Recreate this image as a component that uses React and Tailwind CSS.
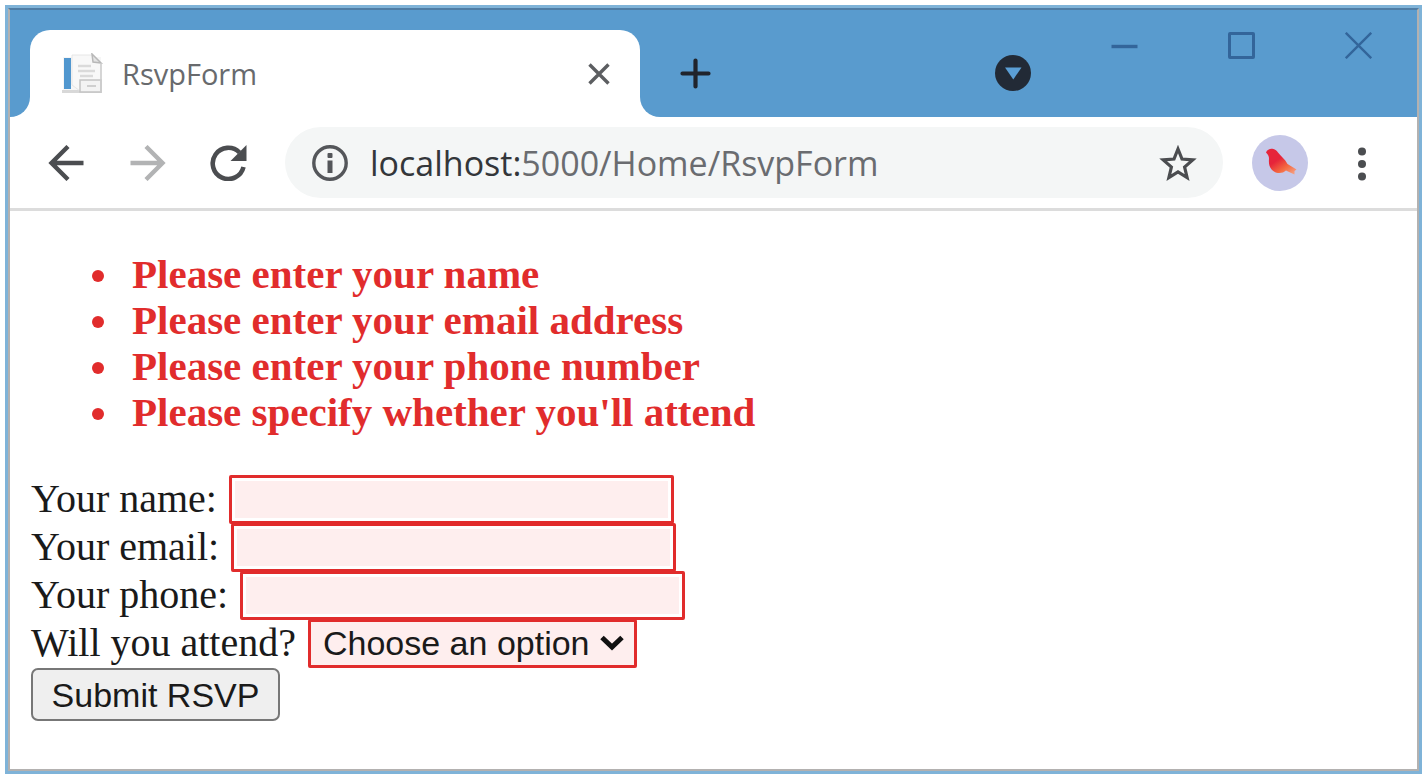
function Favicon() {
  return (
    <svg width="42" height="42" viewBox="0 0 42 42" aria-hidden="true" className="shrink-0">
      <rect x="1" y="4" width="38" height="36" fill="#f6f6f6" />
      <rect x="2" y="5" width="7" height="31" fill="#5197cf" />
      <rect x="0" y="37" width="40" height="3" fill="#d8d8d8" />
      <path d="M10 2h20l9 8v28H18l-8-6z" fill="#f8f8f8" stroke="#e6e6e6" />
      <path d="M30 1l1 8 8 1z" fill="#e4e4e4" stroke="#b8b8b8" strokeWidth="1.500" />
      <path d="M16 13h13M16 18h17M18 23h13" stroke="#dadada" strokeWidth="2.500" />
      <path d="M18 27h21v12H18z" fill="#f3f3f3" stroke="#c4c4c4" strokeWidth="1.500" />
      <path d="M25 33h9" stroke="#cfcfcf" strokeWidth="2" />
      <path d="M39 10v29" stroke="#cccccc" strokeWidth="1.500" />
    </svg>
  );
}

function BirdAvatar() {
  return (
    <svg width="56" height="56" viewBox="0 0 56 56" aria-hidden="true">
      <defs>
        <linearGradient id="bird" x1="0.1" y1="0" x2="0.9" y2="1">
          <stop offset="0.4" stopColor="#e6243a" />
          <stop offset="0.7" stopColor="#f4683f" />
          <stop offset="1" stopColor="#f5a184" />
        </linearGradient>
      </defs>
      <circle cx="28" cy="28" r="28" fill="#c6c8e8" />
      <path
        d="M14 17.500C15 14.500 18 13.500 20.500 13.800C23 14 24.500 15.500 26 17.500C28.500 21 33 24 35.500 29L44.500 34.500L42.500 36L42.500 39.500L36 36.500L34 35.500C31 38.500 25.500 38.800 22 36.500C17.500 33.500 16.500 29 17 24C17 21.500 16.500 20 14 17.500Z"
        fill="url(#bird)"
      />
    </svg>
  );
}

const errors = [
  "Please enter your name",
  "Please enter your email address",
  "Please enter your phone number",
  "Please specify whether you'll attend",
];

const fields = [
  { id: "name", label: "Your name:", type: "text" },
  { id: "email", label: "Your email:", type: "email" },
  { id: "phone", label: "Your phone:", type: "tel" },
];

function TitleBar() {
  return (
    <header className="flex h-[107px] bg-white">
      <div className="w-5 shrink-0 rounded-br-[20px] bg-[#599bce]" />
      <div className="w-[610px] shrink bg-[#599bce] pt-5">
        <div className="flex h-full items-center rounded-t-[20px] bg-white pr-[30px] pl-8">
          <Favicon />
          <span className="ml-[18px] flex-1 font-['Open_Sans',sans-serif] text-[29px] text-[#686a6d]">
            RsvpForm
          </span>
          <button type="button" aria-label="Close tab">
            <svg width="22" height="22" viewBox="0 0 22 22" stroke="#5c5e61" strokeWidth="3.400">
              <path d="M1.500 1.500l19 19M20.500 1.500l-19 19" />
            </svg>
          </button>
        </div>
      </div>
      <div className="flex flex-1 rounded-bl-[20px] bg-[#599bce] pr-[45px] pl-10">
        <button type="button" aria-label="New tab" className="mt-[48px] self-start">
          <svg width="31" height="31" viewBox="0 0 31 31" stroke="#20242c" strokeWidth="4.200" strokeLinecap="round">
            <path d="M15.500 2.500v26M2.500 15.500h26" />
          </svg>
        </button>
        <button type="button" aria-label="Search tabs" className="mt-[45px] mr-20 ml-auto self-start">
          <svg width="36" height="36" viewBox="0 0 36 36">
            <circle cx="18" cy="18" r="18" fill="#222a36" />
            <path d="M10 12.500h16.500l-8.200 12z" fill="#5b9fd6" />
          </svg>
        </button>
        <div className="flex gap-[90px] self-start pt-[22px]">
          <button type="button" aria-label="Minimize">
            <svg width="27" height="27" viewBox="0 0 27 27" stroke="#33659a" strokeWidth="3.400">
              <path d="M0.500 14.500h26" />
            </svg>
          </button>
          <button type="button" aria-label="Maximize">
            <svg width="27" height="27" viewBox="0 0 27 27" fill="none" stroke="#33659a" strokeWidth="3">
              <rect x="1.500" y="1.500" width="24" height="24" rx="0.500" />
            </svg>
          </button>
          <button type="button" aria-label="Close">
            <svg width="27" height="27" viewBox="0 0 27 27" stroke="#33659a" strokeWidth="2.400">
              <path d="M0.800 0.800l25.400 25.400M26.200 0.800L0.800 26.200" />
            </svg>
          </button>
        </div>
      </div>
    </header>
  );
}

function Toolbar() {
  return (
    <nav className="flex h-[94px] items-center border-b-[3px] border-[#dcdcdc] pr-[50px] pl-[38px]">
      <button type="button" aria-label="Back" className="mr-[46px]">
        <svg width="36" height="36" viewBox="0 0 36 36" fill="none" stroke="#4b4d50" strokeWidth="4.400">
          <path d="M35.500 18H4M20 1.500L3.500 18 20 34.500" />
        </svg>
      </button>
      <button type="button" aria-label="Forward" className="mr-11">
        <svg width="36" height="36" viewBox="0 0 36 36" fill="none" stroke="#b2b3b4" strokeWidth="4.400">
          <path d="M0.500 18H32M16 1.500L32.500 18 16 34.500" />
        </svg>
      </button>
      <button type="button" aria-label="Reload" className="mr-[38px]">
        <svg width="37" height="36" viewBox="0 0 37 36">
          <path d="M33.500 22A15.600 15.600 0 1 1 29.500 7.500" fill="none" stroke="#4b4d50" strokeWidth="4.600" />
          <path d="M36.500 0v16H20.500z" fill="#4b4d50" />
        </svg>
      </button>
      <div className="flex h-[71px] min-w-0 flex-1 items-center rounded-full bg-[#f4f6f6] pr-[26px] pl-[27px]">
        <svg width="36" height="36" viewBox="0 0 36 36" fill="none" aria-hidden="true" className="shrink-0">
          <circle cx="18" cy="18" r="16.200" stroke="#54565a" strokeWidth="3.400" />
          <rect x="15.500" y="15.500" width="5" height="12.500" fill="#54565a" />
          <rect x="15.500" y="8" width="5" height="5" rx="1" fill="#54565a" />
        </svg>
        <div className="ml-[22px] min-w-0 flex-1 truncate font-['Open_Sans',sans-serif] text-[34px] leading-[48px] text-[#6a6c70]">
          <span className="text-[#33363a]">localhost:</span>5000/Home/RsvpForm
        </div>
        <button type="button" aria-label="Bookmark this page">
          <svg width="38" height="36" viewBox="0 0 38 36" fill="none" stroke="#4b4d50" strokeWidth="3.200">
            <path d="M19 4l4 10 10.800 0.900-8.200 7.100 2.500 10.500L19 26.900 9.900 32.500 12.400 22 4.200 14.900 15 14z" />
          </svg>
        </button>
      </div>
      <button type="button" aria-label="Profile" className="mr-[49px] ml-[29px]">
        <BirdAvatar />
      </button>
      <button type="button" aria-label="Menu">
        <svg width="10" height="36" viewBox="0 0 10 36" fill="#4b4d50">
          <circle cx="5" cy="6.500" r="4" />
          <circle cx="5" cy="19" r="4" />
          <circle cx="5" cy="31.500" r="4" />
        </svg>
      </button>
    </nav>
  );
}

export default function App() {
  return (
    <div className="flex min-h-screen bg-white p-[5px] pb-1.5 [&_svg]:block">
      <div className="flex min-w-0 flex-1 border-[3px] border-[#7fb3d8]">
        <div className="min-w-0 flex-1 border-2 border-[#b3b1b0] border-t-[#4f7da5]">
          <TitleBar />
          <Toolbar />
          <main className="px-[21px] py-10 font-['Liberation_Serif',serif] text-[40px] leading-[46px] text-[#1a1a1a]">
            <ul className="mb-10 list-disc pl-[92px] text-[41px] font-bold text-[#e12c2c]">
              {errors.map((error) => (
                <li key={error} className="pl-[9px]">
                  {error}
                </li>
              ))}
            </ul>
            <form onSubmit={(event) => event.preventDefault()}>
              {fields.map((field) => (
                <div key={field.id} className="flex h-12 items-center gap-3">
                  <label htmlFor={field.id}>{field.label}</label>
                  <input
                    id={field.id}
                    type={field.type}
                    className="h-[49px] w-[445px] shrink-0 rounded-xs border-[3px] border-[#e12c2c] bg-[#feeeee] bg-clip-content p-[3px] font-['Liberation_Sans',sans-serif] text-[34px] outline-none"
                  />
                </div>
              ))}
              <div className="flex h-12 items-center gap-3">
                <label htmlFor="attend">Will you attend?</label>
                <div className="relative">
                  <select
                    id="attend"
                    className="block h-[49px] w-[329px] appearance-none rounded-xs border-[3px] border-[#e12c2c] bg-[#feeeee] pl-3 font-['Liberation_Sans',sans-serif] text-[34px] leading-[42px] outline-none"
                  >
                    <option>Choose an option</option>
                    <option>Yes, I'll be there</option>
                    <option>No, I can't come</option>
                  </select>
                  <svg
                    width="24"
                    height="16"
                    viewBox="0 0 24 16"
                    fill="none"
                    stroke="#111111"
                    strokeWidth="5"
                    aria-hidden="true"
                    className="pointer-events-none absolute top-4 right-[13px]"
                  >
                    <path d="M2 2.500l10 9.500 10-9.500" />
                  </svg>
                </div>
              </div>
              <button
                type="submit"
                className="mt-px flex h-[53px] w-[249px] items-center justify-center rounded-[7px] border-2 border-[#777777] bg-[#efefef] font-['Liberation_Sans',sans-serif] text-[34px] leading-none"
              >
                Submit RSVP
              </button>
            </form>
          </main>
        </div>
      </div>
    </div>
  );
}
